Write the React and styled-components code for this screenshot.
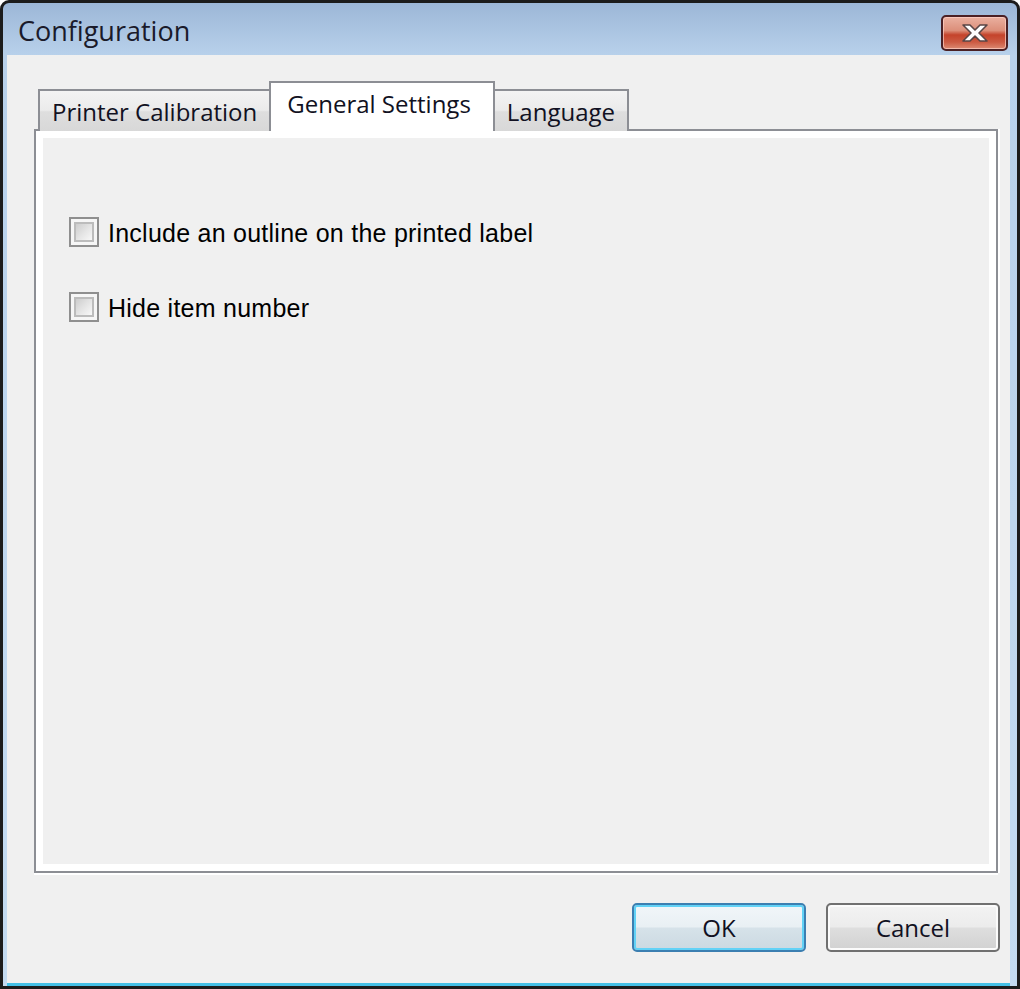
import React from "react";
import styled, { createGlobalStyle } from "styled-components";

const GlobalStyle = createGlobalStyle`
    html, body {
        margin: 0;
        padding: 0;
        background: #ffffff;
    }
    * {
        box-sizing: border-box;
    }
`;

const tabs = [
    { label: "Printer Calibration" },
    { label: "General Settings", active: true },
    { label: "Language" },
];

const options = [
    "Include an outline on the printed label",
    "Hide item number",
];

function CloseGlyph() {
    return (
        <svg width="30" height="20" viewBox="0 0 30 20">
            <path
                d="M3 2 H10 L15 7 L20 2 H27 L19 10 L27 18 H20 L15 13 L10 18 H3 L11 10 Z"
                fill="#ffffff"
                stroke="#5a4646"
                strokeWidth="1.6"
                strokeLinejoin="round"
            />
        </svg>
    );
}

export default function App() {
    return (
        <>
            <GlobalStyle />
            <Window>
                <TitleBar>
                    <Title>Configuration</Title>
                    <CloseButton aria-label="Close">
                        <CloseGlyph />
                    </CloseButton>
                </TitleBar>

                <Client>
                    <TabStrip>
                        {tabs.map((tab) => (
                            <Tab key={tab.label} active={tab.active}>
                                {tab.label}
                            </Tab>
                        ))}
                    </TabStrip>

                    <Panel>
                        <PanelInner>
                            {options.map((text) => (
                                <CheckRow key={text}>
                                    <CheckBox />
                                    <CheckLabel>{text}</CheckLabel>
                                </CheckRow>
                            ))}
                        </PanelInner>
                    </Panel>

                    <ButtonRow>
                        <DialogButton primary>OK</DialogButton>
                        <DialogButton>Cancel</DialogButton>
                    </ButtonRow>
                </Client>
            </Window>
        </>
    );
}

const Window = styled.div`
    width: 1020px;
    height: 989px;
    display: flex;
    flex-direction: column;
    border: 3px solid #1c1c1c;
    border-radius: 9px 9px 0 0;
    overflow: hidden;
    background: linear-gradient(to bottom, #9cb7d7 0px, #b8d1eb 52px, #c4dbf1 100%);
`;

const TitleBar = styled.div`
    height: 52px;
    flex-shrink: 0;
    display: flex;
    align-items: center;
    justify-content: space-between;
    padding: 0 9px 0 15px;
`;

const Title = styled.div`
    font-family: "Open Sans", "Noto Sans", sans-serif;
    font-size: 27px;
    color: #1a1a2a;
    margin-top: 2px;
`;

const CloseButton = styled.div`
    width: 67px;
    height: 36px;
    margin-top: 7px;
    border: 2px solid #4a2024;
    border-radius: 5px;
    display: flex;
    align-items: center;
    justify-content: center;
    background: linear-gradient(
        to bottom,
        #eab0a0 0%,
        #dc8f7a 42%,
        #c4432b 56%,
        #cc5a42 78%,
        #dc8a72 100%
    );
    box-shadow: inset 0 0 0 1px rgba(255, 210, 200, 0.7);
`;

const Client = styled.div`
    flex: 1;
    display: flex;
    flex-direction: column;
    margin: 0 7px 0 4px;
    padding: 26px 10px 31px 27px;
    background: #f0f0f0;
    border-bottom: 3px solid #44c0e6;
`;

const TabStrip = styled.div`
    display: flex;
    align-items: flex-end;
    padding-left: 4px;
    position: relative;
    z-index: 1;
    margin-bottom: -2px;
`;

const Tab = styled.div`
    font-family: "Open Sans", "Noto Sans", sans-serif;
    font-size: 24px;
    color: #111122;
    white-space: nowrap;
    display: flex;
    align-items: center;
    border: 2px solid #8c8e94;
    border-bottom: none;
    height: ${(p) => (p.active ? "50px" : "42px")};
    padding: ${(p) => (p.active ? "0 22px 8px 16px" : "0 12px 0 12px")};
    margin: ${(p) => (p.active ? "0 -2px" : "0")};
    position: relative;
    z-index: ${(p) => (p.active ? 2 : 1)};
    background: ${(p) =>
        p.active
            ? "#ffffff"
            : "linear-gradient(to bottom, #f3f3f3 0%, #ebebeb 48%, #dedede 52%, #d8d8d8 100%)"};
`;

const Panel = styled.div`
    flex: 1;
    display: flex;
    margin-right: 2px;
    border: 2px solid #8c8e94;
    box-shadow: 0 2px 0 #ffffff, 2px 0 0 #ffffff;
`;

const PanelInner = styled.div`
    flex: 1;
    border: 7px solid #ffffff;
    background: #f0f0f0;
    padding: 79px 0 0 26px;
    display: flex;
    flex-direction: column;
    gap: 45px;
`;

const CheckRow = styled.label`
    display: flex;
    align-items: flex-end;
    gap: 9px;
`;

const CheckBox = styled.span`
    width: 30px;
    height: 30px;
    flex-shrink: 0;
    border: 2px solid #8f8f8f;
    background: #f6f6f6;
    padding: 3px;
    display: flex;
    &::after {
        content: "";
        flex: 1;
        border: 2px solid #bcbcbc;
        background: linear-gradient(135deg, #cdcdcd 0%, #e6e6e6 55%, #f8f8f8 100%);
    }
`;

const CheckLabel = styled.span`
    font-family: "Liberation Sans", Arial, sans-serif;
    font-size: 25px;
    line-height: 28px;
    letter-spacing: 0.25px;
    color: #000000;
    white-space: nowrap;
`;

const ButtonRow = styled.div`
    display: flex;
    justify-content: flex-end;
    gap: 20px;
    margin-top: 30px;
`;

const DialogButton = styled.div`
    width: 174px;
    height: 49px;
    display: flex;
    align-items: center;
    justify-content: center;
    font-family: "Open Sans", "Noto Sans", sans-serif;
    font-size: 24px;
    color: #111122;
    border-radius: 5px;
    border: 2px solid ${(p) => (p.primary ? "#3c7fb1" : "#707070")};
    box-shadow: inset 0 0 0 2px ${(p) => (p.primary ? "#62d2f6" : "#fbfbfb")};
    background: ${(p) =>
        p.primary
            ? "linear-gradient(to bottom, #f1f6f9 0%, #e9f0f4 48%, #d6e2e9 52%, #cbd9e1 100%)"
            : "linear-gradient(to bottom, #f3f3f3 0%, #ececec 48%, #dedede 52%, #d1d1d1 100%)"};
`;
